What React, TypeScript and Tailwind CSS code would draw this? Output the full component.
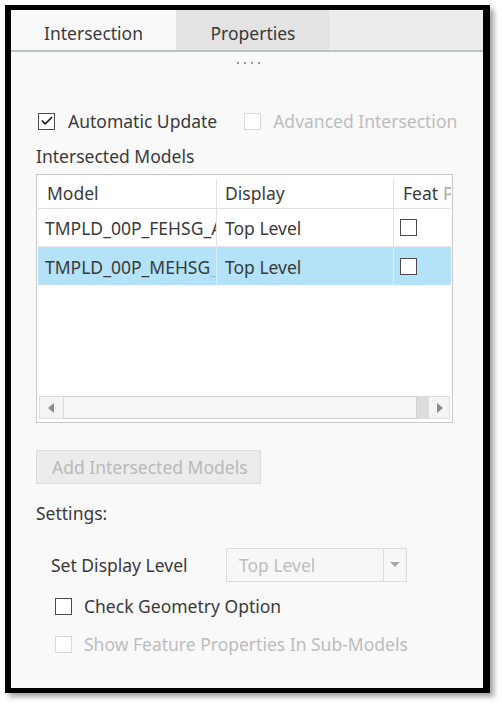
import { Check } from "lucide-react"

const font = { fontFamily: '"Noto Sans", "Open Sans", sans-serif' }

function Box({ checked, disabled }: { checked?: boolean; disabled?: boolean }) {
  return (
    <span
      className={
        "flex h-[17px] w-[17px] shrink-0 items-center justify-center border bg-white " +
        (disabled ? "border-[#dadada]" : "border-[#4a4a4a]")
      }
    >
      {checked && <Check className="h-[14px] w-[14px] text-[#222]" strokeWidth={3} />}
    </span>
  )
}

export default function App() {
  return (
    <div className="h-[707px] w-[502px] bg-white pl-[5px] pt-[5px]" style={font}>
      <div className="flex h-[688px] w-[485px] flex-col border-t-[5px] border-r-[7px] border-b-[5px] border-l-[6px] border-black bg-[#f9f9f9] shadow-[4px_4px_5px_rgba(0,0,0,0.35)]">
        {/* Tabs */}
        <div className="flex h-[42px] border-b-2 border-[#b9c3c3] text-[17.5px] text-[#3a3a3a]">
          <div className="flex w-[165px] items-center justify-center bg-[#f9f9f9] pt-[7px]">Intersection</div>
          <div className="flex w-[154px] items-center justify-center bg-[#e3e3e3] pt-[7px]">Properties</div>
          <div className="flex-1 border-l border-[#f2f2f2] bg-[#ececec]" />
        </div>
        <div className="flex h-[22px] items-center justify-center gap-[5px] pl-[2px]">
          <span className="h-[2px] w-[2px] bg-[#999]" />
          <span className="h-[2px] w-[2px] bg-[#999]" />
          <span className="h-[2px] w-[2px] bg-[#999]" />
          <span className="h-[2px] w-[2px] bg-[#999]" />
        </div>

        <div className="flex flex-col pl-[25px] text-[17.5px] text-[#3a3a3a]">
          {/* Options */}
          <div className="mt-[35px] flex h-[24px] items-center">
            <span className="ml-[2px]">
              <Box checked />
            </span>
            <span className="ml-[13px]">Automatic Update</span>
            <span className="ml-[27px]">
              <Box disabled />
            </span>
            <span className="ml-[12px] text-[#bdbdbd]">Advanced Intersection</span>
          </div>

          <div className="mt-[12px] h-[22px] leading-[22px]">Intersected Models</div>

          {/* Table */}
          <div className="mt-[7px] flex h-[249px] w-[417px] flex-col border border-[#c9c9c9] bg-white p-px">
            <div className="flex h-[33px] border-b border-[#e2e2e2] pt-[3px]">
              <div className="flex w-[179px] items-center border-r border-[#e2e2e2] pl-[9px]">Model</div>
              <div className="flex w-[177px] items-center border-r border-[#e2e2e2] pl-[8px]">Display</div>
              <div className="flex flex-1 items-center overflow-hidden whitespace-nowrap pl-[9px]">
                Feat <span className="ml-[5px] text-[#aaa]">P</span>
              </div>
            </div>
            <div className="flex h-[38px] border-b border-[#e6e6e6]">
              <div className="flex w-[179px] items-center overflow-hidden whitespace-nowrap border-r border-[#e2e2e2] pl-[7px] pt-[2px]">
                TMPLD_00P_FEHSG_ASM
              </div>
              <div className="flex w-[177px] items-center border-r border-[#e2e2e2] pl-[8px] pt-[2px]">Top Level</div>
              <div className="flex flex-1 items-center pl-[6px]">
                <Box />
              </div>
            </div>
            <div className="flex h-[38px] bg-[#b3e2f9]">
              <div className="flex w-[179px] items-center overflow-hidden whitespace-nowrap border-r border-[#d8eefa] pl-[7px] pt-[2px]">
                TMPLD_00P_MEHSG<span className="text-[#9dbfcf]">_ASM</span>
              </div>
              <div className="flex w-[177px] items-center border-r border-[#d8eefa] pl-[8px] pt-[2px]">Top Level</div>
              <div className="flex flex-1 items-center pl-[6px]">
                <Box />
              </div>
            </div>
            <div className="flex-1" />
            {/* Scrollbar */}
            <div className="mx-px mb-[2px] flex h-[23px]">
              <div className="flex w-[25px] items-center justify-center border border-[#dcdcdc] bg-[#f4f4f4]">
                <svg width="7" height="10" viewBox="0 0 7 10">
                  <path d="M6 0 L0 5 L6 10 Z" fill="#8a8a8a" />
                </svg>
              </div>
              <div className="flex-1 border border-l-0 border-[#d0d0d0] bg-[#f6f6f6]" />
              <div className="w-[11px] border-y border-[#dcdcdc] bg-[#dcdcdc]" />
              <div className="flex w-[22px] items-center justify-center border border-[#dcdcdc] bg-[#f4f4f4]">
                <svg width="7" height="10" viewBox="0 0 7 10">
                  <path d="M1 0 L7 5 L1 10 Z" fill="#8a8a8a" />
                </svg>
              </div>
            </div>
          </div>

          {/* Add button */}
          <div className="mt-[27px] flex h-[34px] w-[225px] items-center border border-[#dcdcdc] bg-[#ececec] pl-[15px] text-[#b9b9b9]">
            Add Intersected Models
          </div>

          <div className="mt-[18px] h-[22px] leading-[22px]">Settings:</div>

          {/* Settings */}
          <div className="mt-[24px] flex h-[34px] items-center pl-[15px]">
            <span className="w-[175px]">Set Display Level</span>
            <div className="flex h-[34px] w-[181px] border border-[#dcdcdc] bg-[#f7f7f7] text-[#bdbdbd]">
              <div className="flex flex-1 items-center pl-[12px]">Top Level</div>
              <div className="flex w-[23px] items-center justify-center border-l border-[#dcdcdc]">
                <svg width="10" height="6" viewBox="0 0 10 6">
                  <path d="M0 0 L10 0 L5 5 Z" fill="#a8a8a8" />
                </svg>
              </div>
            </div>
          </div>

          <div className="mt-[12px] flex h-[24px] items-center pl-[19px]">
            <Box />
            <span className="ml-[12px]">Check Geometry Option</span>
          </div>

          <div className="mt-[14px] flex h-[24px] items-center pl-[19px]">
            <Box disabled />
            <span className="ml-[12px] text-[#bdbdbd]">Show Feature Properties In Sub-Models</span>
          </div>
        </div>
      </div>
    </div>
  )
}
